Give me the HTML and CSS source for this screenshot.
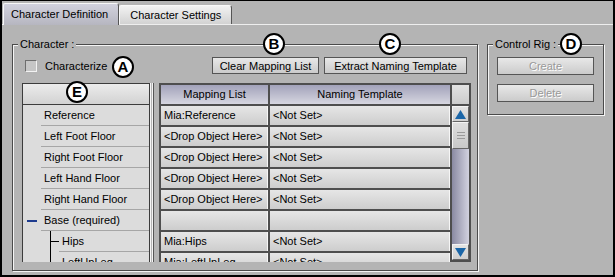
FILE: index.html
```html
<!DOCTYPE html>
<html lang="en">
<head>
    <meta charset="UTF-8">
    <title>Character Definition</title>
    <link rel="stylesheet" href="styles.css">
</head>
<body>

    <div class="frame">

        <!-- Tabs -->
        <div class="tabs">
            <div class="tab active">Character Definition</div>
            <div class="tab">Character Settings</div>
        </div>

        <div class="panel">

            <!-- Character group -->
            <div class="group character">
                <span class="legend">Character :</span>

                <div class="toolbar">
                    <label class="check"><span class="box"></span>Characterize</label>
                    <div class="actions">
                        <button class="btn clear">Clear Mapping List</button>
                        <button class="btn extract">Extract Naming Template</button>
                    </div>
                </div>

                <div class="lists">
                    <div class="tree">
                        <div class="tree-head"></div>
                        <div class="node"><span class="mark"></span><span class="label">Reference</span></div>
                        <div class="node"><span class="mark"></span><span class="label">Left Foot Floor</span></div>
                        <div class="node"><span class="mark"></span><span class="label">Right Foot Floor</span></div>
                        <div class="node"><span class="mark"></span><span class="label">Left Hand Floor</span></div>
                        <div class="node"><span class="mark"></span><span class="label">Right Hand Floor</span></div>
                        <div class="node"><span class="mark"><i class="dash"></i></span><span class="label">Base (required)</span></div>
                        <div class="children">
                            <div class="node"><span class="tick"></span><span class="label">Hips</span></div>
                            <div class="node"><span class="tick"></span><span class="label">LeftUpLeg</span></div>
                        </div>
                    </div>

                    <div class="splitter"></div>

                    <div class="map">
                        <div class="map-cols">
                            <div class="head">Mapping List</div>
                            <div class="head">Naming Template</div>
                            <div class="cell">Mia:Reference</div>
                            <div class="cell">&lt;Not Set&gt;</div>
                            <div class="cell">&lt;Drop Object Here&gt;</div>
                            <div class="cell">&lt;Not Set&gt;</div>
                            <div class="cell">&lt;Drop Object Here&gt;</div>
                            <div class="cell">&lt;Not Set&gt;</div>
                            <div class="cell">&lt;Drop Object Here&gt;</div>
                            <div class="cell">&lt;Not Set&gt;</div>
                            <div class="cell">&lt;Drop Object Here&gt;</div>
                            <div class="cell">&lt;Not Set&gt;</div>
                            <div class="cell"></div>
                            <div class="cell"></div>
                            <div class="cell">Mia:Hips</div>
                            <div class="cell">&lt;Not Set&gt;</div>
                            <div class="cell">Mia:LeftUpLeg</div>
                            <div class="cell">&lt;Not Set&gt;</div>
                        </div>
                        <div class="scroll">
                            <div class="corner"></div>
                            <div class="bar">
                                <div class="arrow up">
                                    <svg width="11" height="9" viewBox="0 0 11 9"><polygon points="5.5,0 11,9 0,9" fill="#1b66a8"/></svg>
                                </div>
                                <div class="thumb"><span></span><span></span><span></span></div>
                                <div class="track"></div>
                                <div class="arrow down">
                                    <svg width="11" height="9" viewBox="0 0 11 9"><polygon points="0,0 11,0 5.5,9" fill="#1b66a8"/></svg>
                                </div>
                            </div>
                        </div>
                    </div>
                </div>
            </div>

            <!-- Control Rig group -->
            <div class="group rig">
                <span class="legend">Control Rig :</span>
                <button class="btn wide" disabled>Create</button>
                <button class="btn wide" disabled>Delete</button>
            </div>

        </div>

        <!-- Callout letters -->
        <span class="badge badge-a">A</span>
        <span class="badge badge-b">B</span>
        <span class="badge badge-c">C</span>
        <span class="badge badge-d">D</span>
        <span class="badge badge-e">E</span>
    </div>

</body>
</html>
```

FILE: styles.css
```css
body {
    margin: 0;
    padding: 0;
    background: #000;
    font-family: "Liberation Sans", Arial, sans-serif;
    font-size: 11px;
    color: #000;
}

.frame {
    position: relative;
    width: 615px;
    height: 277px;
    box-sizing: border-box;
    border-top: 1px solid #000;
    border-left: 2px solid #000;
    border-right: 2px solid #000;
    border-bottom: 2px solid #000;
    background: #b4b4b4;
    overflow: hidden;
}

/* Tabs */
.tabs {
    height: 24px;
    box-sizing: border-box;
    display: flex;
    align-items: flex-end;
    padding-left: 1px;
    border-bottom: 1px solid #eeeeee;
}

.tab {
    height: 19px;
    line-height: 18px;
    padding: 0 10px;
    box-sizing: border-box;
    background: linear-gradient(#f2f2f2, #d2d2d2);
    border-top: 1px solid #f8f8f8;
    border-left: 1px solid #f8f8f8;
    border-right: 1px solid #555;
    border-radius: 2px 3px 0 0;
}

.tab.active {
    height: 22px;
    line-height: 20px;
    padding: 0 10px 0 7px;
    margin-bottom: -1px;
    background: linear-gradient(#d2d2de, #b6b6c0);
}

/* Panel */
.panel {
    display: flex;
    align-items: flex-start;
    padding: 19px 0 0 10px;
}

.group {
    position: relative;
    border: 1px solid #4a4a4a;
    box-shadow: inset 1px 1px 0 #f4f4f4, 1px 1px 0 #f4f4f4;
}

.legend {
    position: absolute;
    top: -7px;
    left: 5px;
    padding: 0 2px;
    line-height: 13px;
    background: #b4b4b4;
}

.character {
    width: 466px;
    box-sizing: border-box;
    padding: 12px 6px 8px 9px;
}

.rig {
    width: 117px;
    box-sizing: border-box;
    margin-left: 9px;
    padding: 12px 9px 12px 9px;
    display: flex;
    flex-direction: column;
    gap: 9px;
}

/* Toolbar */
.toolbar {
    display: flex;
    align-items: center;
    height: 17px;
}

.check {
    display: flex;
    align-items: center;
    gap: 8px;
    padding-left: 3px;
}

.box {
    width: 12px;
    height: 12px;
    box-sizing: border-box;
    background: #c6c6c6;
    border-top: 1px solid #6e6e6e;
    border-left: 1px solid #6e6e6e;
    border-right: 1px solid #f2f2f2;
    border-bottom: 1px solid #f2f2f2;
}

.actions {
    margin-left: auto;
    margin-right: 4px;
    display: flex;
    gap: 5px;
}

.btn {
    height: 17px;
    padding: 0;
    font-family: inherit;
    font-size: 11px;
    color: #000;
    background: linear-gradient(#e8e8e8, #cbcbcb);
    border: 1px solid #555;
    border-radius: 0;
}

.clear { width: 107px; }
.extract { width: 143px; }

.wide {
    width: 97px;
    height: 18px;
}

.btn:disabled {
    color: #999;
    text-shadow: 1px 1px 0 #fff;
}

/* Lists */
.lists {
    display: flex;
    margin-top: 9px;
    height: 179px;
}

.tree {
    width: 128px;
    height: 179px;
    box-sizing: border-box;
    overflow: hidden;
    background: #dcdcdc;
    border: 1px solid #3c3c3c;
    border-bottom: none;
    box-shadow: 1px 0 0 #f4f4f4;
}

.tree-head {
    height: 20px;
    background: linear-gradient(#ececec, #d2d2d2);
    border-bottom: 1px solid #3c3c3c;
}

.node {
    display: flex;
    align-items: center;
    height: 21px;
}

.mark {
    width: 18px;
    flex: none;
    display: flex;
    align-items: center;
}

.dash {
    display: block;
    width: 10px;
    height: 2px;
    margin-left: 4px;
    background: #1d3b8e;
}

.label {
    flex: 1;
    height: 21px;
    line-height: 21px;
    box-sizing: border-box;
    padding-left: 3px;
    border-bottom: 1px solid #a6a6a6;
    white-space: nowrap;
}

.children {
    margin-left: 27px;
    border-left: 1px solid #000;
}

.tick {
    width: 8px;
    height: 1px;
    flex: none;
    background: #000;
}

.splitter {
    width: 2px;
    margin: 0 5px 0 2px;
    box-sizing: border-box;
    border-left: 1px solid #f4f4f4;
    border-right: 1px solid #555;
}

/* Mapping grid */
.map {
    display: flex;
    gap: 2px;
    width: 312px;
    height: 179px;
    box-sizing: border-box;
    padding: 2px 2px 0 2px;
    background: #4e4e4e;
    overflow: hidden;
}

.map-cols {
    display: grid;
    grid-template-columns: 107px 180px;
    grid-auto-rows: 19px;
    gap: 2px;
    align-content: start;
}

.head {
    text-align: center;
    line-height: 19px;
    background: linear-gradient(#a2a2ba, #d6d6e0);
}

.cell {
    line-height: 19px;
    padding-left: 3px;
    white-space: nowrap;
    overflow: hidden;
    background: linear-gradient(#e6e6e6, #cdcdcd);
    border-right: 1px solid #f6f6f6;
}

.scroll {
    width: 17px;
    display: flex;
    flex-direction: column;
    gap: 2px;
}

.corner {
    height: 19px;
    background: linear-gradient(#e2e2e2, #cccccc);
}

.bar {
    height: 154px;
    display: flex;
    flex-direction: column;
    background: #f0f0f0;
}

.arrow {
    height: 16px;
    box-sizing: border-box;
    display: flex;
    align-items: center;
    justify-content: center;
    background: linear-gradient(#e4e4e4, #cfcfcf);
    border: 1px solid #f4f4f4;
    border-right-color: #666;
    border-bottom-color: #666;
}

.thumb {
    height: 27px;
    box-sizing: border-box;
    display: flex;
    flex-direction: column;
    align-items: center;
    justify-content: center;
    gap: 2px;
    background: linear-gradient(#dedede, #c8c8c8);
    border: 1px solid #f4f4f4;
    border-right-color: #666;
    border-bottom-color: #666;
}

.thumb span {
    width: 8px;
    height: 1px;
    background: #9a9a9a;
}

.track {
    flex: 1;
    background: linear-gradient(to right, #8a8aa2, #d2d2e0);
}

/* Callouts */
.badge {
    position: absolute;
    width: 22px;
    height: 22px;
    box-sizing: border-box;
    border: 2px solid #000;
    border-radius: 50%;
    background: #fff;
    font-size: 15px;
    font-weight: bold;
    line-height: 18px;
    text-align: center;
}

.badge-a { left: 110px; top: 55px; }
.badge-b { left: 261px; top: 32px; }
.badge-c { left: 377px; top: 32px; }
.badge-d { left: 558px; top: 32px; }
.badge-e { left: 64px; top: 80px; }
```
